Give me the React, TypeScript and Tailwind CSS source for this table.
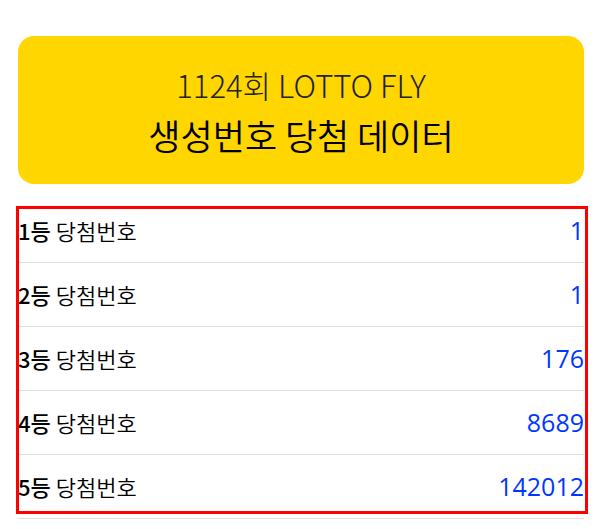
const rows = [
  { rank: "1등", count: "1" },
  { rank: "2등", count: "1" },
  { rank: "3등", count: "176" },
  { rank: "4등", count: "8689" },
  { rank: "5등", count: "142012" },
]

const kr = { fontFamily: '"Noto Sans CJK KR", "Noto Sans", sans-serif' }
const num = { fontFamily: '"Open Sans", "Inter", sans-serif' }

export default function App() {
  return (
    <div className="min-h-[529px] bg-white pt-[36px] pl-[18px]" style={kr}>
      <div className="w-[566px]">
        <div className="h-[148px] rounded-2xl bg-[#ffd600] flex flex-col items-center justify-center">
          <p className="text-[31px] leading-[40px] font-light text-[#222222]">1124회 LOTTO FLY</p>
          <h1 className="mt-[10px] text-[35px] leading-[40px] font-[350] text-black">생성번호 당첨 데이터</h1>
        </div>

        <div className="relative mt-[15px]">
          <ul>
            {rows.map((r) => (
              <li key={r.rank} className="h-[64px] flex items-center justify-between border-b border-[#e0e0e0]">
                <span className="text-[22px] font-[350] text-black">
                  <span className="font-medium">{r.rank}</span> 당첨번호
                </span>
                <span className="text-[25px] text-[#0037ff]" style={num}>{r.count}</span>
              </li>
            ))}
          </ul>
          {/* highlight frame */}
          <div className="absolute top-[7px] left-[-2px] w-[572px] h-[308px] border-[3px] border-[#ff0000] pointer-events-none"></div>
        </div>
      </div>
    </div>
  )
}
